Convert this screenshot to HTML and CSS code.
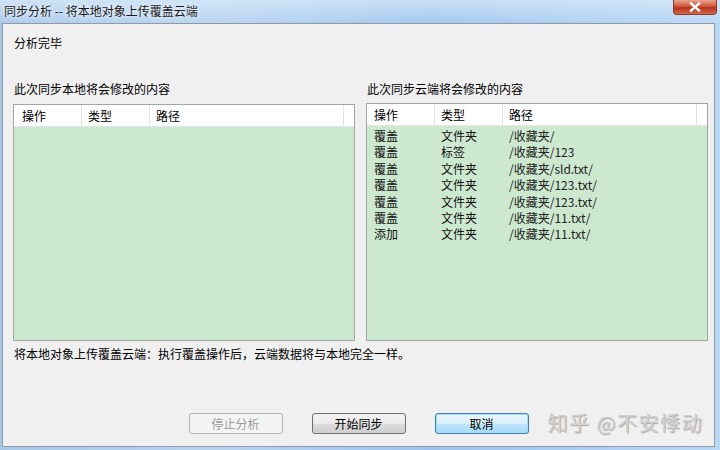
FILE: index.html
```html
<!DOCTYPE html>
<html>
<head>
<meta charset="utf-8">
<link rel="stylesheet" href="styles.css">
</head>
<body>
<div class="window">
  <div class="titlebar">
    <span class="title">同步分析 -- 将本地对象上传覆盖云端</span>
    <div class="close"><svg width="14" height="10" viewBox="0 0 14 10"><path d="M3 1.5 L11 8.5 M11 1.5 L3 8.5" stroke="#fff" stroke-width="2.4" stroke-linecap="square"/></svg></div>
  </div>
  <div class="client">
    <div class="status">分析完毕</div>
    <div class="panels">
      <div class="panel">
        <div class="label">此次同步本地将会修改的内容</div>
        <div class="list list-left">
          <div class="head">
            <span class="c1">操作</span><span class="c2">类型</span><span class="c3">路径</span><span class="cf"></span>
          </div>
          <div class="rows"></div>
        </div>
      </div>
      <div class="panel">
        <div class="label">此次同步云端将会修改的内容</div>
        <div class="list list-right">
          <div class="head">
            <span class="c1">操作</span><span class="c2">类型</span><span class="c3">路径</span><span class="cf"></span>
          </div>
          <div class="rows">
            <div class="row"><span class="c1">覆盖</span><span class="c2">文件夹</span><span class="c3">/收藏夹/</span></div>
            <div class="row"><span class="c1">覆盖</span><span class="c2">标签</span><span class="c3">/收藏夹/123</span></div>
            <div class="row"><span class="c1">覆盖</span><span class="c2">文件夹</span><span class="c3">/收藏夹/sld.txt/</span></div>
            <div class="row"><span class="c1">覆盖</span><span class="c2">文件夹</span><span class="c3">/收藏夹/123.txt/</span></div>
            <div class="row"><span class="c1">覆盖</span><span class="c2">文件夹</span><span class="c3">/收藏夹/123.txt/</span></div>
            <div class="row"><span class="c1">覆盖</span><span class="c2">文件夹</span><span class="c3">/收藏夹/11.txt/</span></div>
            <div class="row"><span class="c1">添加</span><span class="c2">文件夹</span><span class="c3">/收藏夹/11.txt/</span></div>
          </div>
        </div>
      </div>
    </div>
    <div class="note">将本地对象上传覆盖云端：执行覆盖操作后，云端数据将与本地完全一样。</div>
    <div class="buttons">
      <button class="btn disabled">停止分析</button>
      <button class="btn">开始同步</button>
      <button class="btn default">取消</button>
    </div>
    <div class="watermark">知乎 @不安悸动</div>
  </div>
</div>
</body>
</html>
```
FILE: styles.css
```css
html, body {
  margin: 0;
  padding: 0;
  width: 720px;
  height: 450px;
  overflow: hidden;
}
body {
  font-family: "Noto Sans CJK SC", "DejaVu Sans", sans-serif;
  font-size: 12px;
  color: #000;
}
.window {
  width: 720px;
  height: 450px;
  display: flex;
  flex-direction: column;
  background: linear-gradient(90deg, #a8c8e8 0%, #b7d4f0 30%, #9cc4ee 60%, #b9d8f5 100%);
}
.titlebar {
  height: 23px;
  position: relative;
  display: flex;
  align-items: center;
  padding-left: 4px;
  background: linear-gradient(180deg, rgba(220,235,250,0.7) 0%, rgba(200,222,245,0.2) 100%);
}
.title {
  font-size: 12px;
  color: #1a1a1a;
  text-shadow: 0 0 6px #eef5fc, 0 0 3px #eef5fc;
  margin-top: -3px;
}
.close {
  position: absolute;
  right: 3px;
  top: 0;
  width: 44px;
  height: 15px;
  border: 1px solid #8a3a2e;
  border-top: none;
  border-radius: 0 0 4px 4px;
  background: linear-gradient(180deg, #e8a590 0%, #d0553c 45%, #b8321c 55%, #d06a4a 100%);
  display: flex;
  align-items: center;
  justify-content: center;
  box-sizing: border-box;
}
.client {
  flex: 1;
  margin: 0 5px 3px 2px;
  background: #f0f0f0;
  border: 1px solid #8e9aa8;
  position: relative;
  padding: 0 6px 0 10px;
  display: flex;
  flex-direction: column;
}
.status {
  margin-top: 11px;
  line-height: 16px;
  padding-left: 1px;
}
.panels {
  display: flex;
  gap: 11px;
  margin-top: 30px;
}
.panel {
  width: 342px;
  display: flex;
  flex-direction: column;
}
.label {
  line-height: 16px;
  padding-left: 1px;
  margin-bottom: 7px;
}
.list {
  height: 237px;
  border: 1px solid #a0a8a0;
  box-sizing: border-box;
  background: #cce8cf;
  display: flex;
  flex-direction: column;
}
.list-right { margin-top: -1px; height: 238px; }
.head {
  height: 22px;
  background: #fff;
  display: flex;
  align-items: center;
  border-bottom: 1px solid #e6e6e6;
  box-sizing: border-box;
  flex: none;
}
.head span {
  height: 100%;
  display: flex;
  align-items: center;
  border-right: 1px solid #e3e3e3;
  box-sizing: border-box;
}
.head .cf { flex: 1; border-right: none; }
.c1 { width: 68px; padding-left: 7px; box-sizing: border-box; flex: none; }
.c2 { width: 68px; padding-left: 6px; box-sizing: border-box; flex: none; }
.c3 { width: 194px; padding-left: 6px; box-sizing: border-box; flex: none; }
.list-left .c1 { padding-left: 8px; }
.rows {
  padding-top: 2px;
}
.row {
  display: flex;
  height: 16.4px;
  line-height: 16.4px;
  color: #111;
}
.row .c3 { color: #222; }
.note {
  margin-top: 5px;
  line-height: 16px;
  padding-left: 1px;
}
.buttons {
  display: flex;
  justify-content: center;
  gap: 29px;
  margin-top: 51px;
  padding-right: 4px;
}
.btn {
  width: 94px;
  height: 21px;
  font-family: "Noto Sans CJK SC", "DejaVu Sans", sans-serif;
  font-size: 12px;
  color: #000;
  border: 1px solid #707070;
  border-radius: 3px;
  background: linear-gradient(180deg, #f2f2f2 0%, #ebebeb 50%, #dddddd 51%, #cfcfcf 100%);
  padding: 0;
  line-height: 19px;
}
.btn.disabled {
  border-color: #b5b5b5;
  background: #f4f4f4;
  color: #9a9a9a;
}
.btn.default {
  border-color: #3c7fb1;
  box-shadow: inset 0 0 0 1px #a8dcf6;
  background: linear-gradient(180deg, #eaf6fd 0%, #d9f0fc 50%, #bee6fd 51%, #a7d9f5 100%);
}
.watermark {
  position: absolute;
  right: 11px;
  bottom: 9px;
  font-size: 20px;
  color: #d0d0d0;
  text-shadow: 1px 1px 1px #a8a8a8;
  letter-spacing: 1.5px;
}
```
